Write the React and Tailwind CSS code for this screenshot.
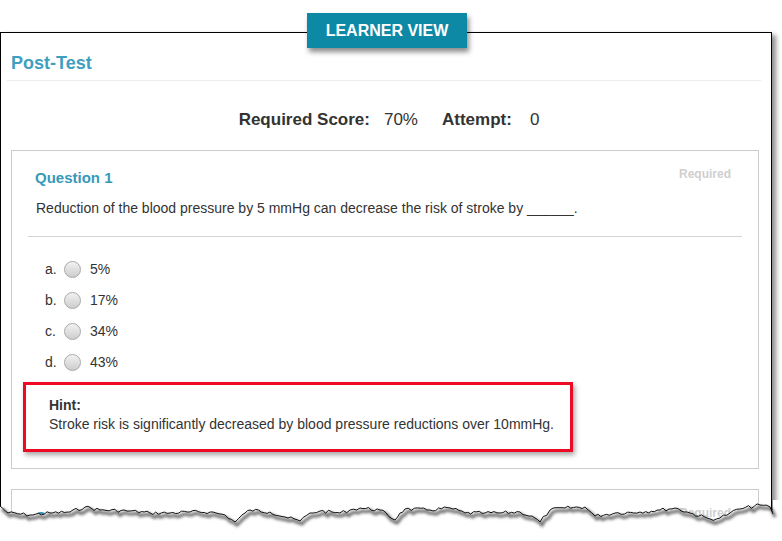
import React from 'react'

// anchor points of the torn paper edge, traced from the picture
const TEAR = [
  [0, 506], [8, 513], [30, 515], [50, 513], [70, 512], [85, 507], [100, 510], [130, 511],
  [150, 513], [170, 513], [190, 512], [210, 512], [225, 515], [235, 522], [245, 513],
  [250, 510], [270, 512], [285, 517], [300, 521], [310, 513], [320, 511], [340, 513],
  [350, 510], [360, 508], [380, 510], [395, 520], [400, 513], [405, 509], [430, 510],
  [450, 508], [465, 513], [485, 513], [500, 513], [520, 512], [535, 518], [540, 522],
  [550, 510], [565, 508], [585, 507], [595, 516], [615, 513], [640, 512], [660, 510],
  [675, 508], [690, 513], [710, 519], [720, 518], [730, 513], [740, 509], [760, 505],
  [770, 507], [773, 514],
]

function tearLine() {
  let seed = 7
  const rnd = () => {
    seed = (seed * 9301 + 49297) % 233280
    return seed / 233280
  }
  const pts = []
  for (let i = 0; i < TEAR.length - 1; i++) {
    const [x1, y1] = TEAR[i]
    const [x2, y2] = TEAR[i + 1]
    const steps = Math.max(1, Math.round((x2 - x1) / 3))
    for (let s = 0; s < steps; s++) {
      const t = s / steps
      const jitter = s === 0 ? 0 : (rnd() - 0.5) * 3.5
      pts.push([x1 + (x2 - x1) * t, y1 + (y2 - y1) * t + jitter])
    }
  }
  pts.push(TEAR[TEAR.length - 1])
  return pts.map((p, i) => `${i === 0 ? 'M' : 'L'}${p[0].toFixed(1)} ${p[1].toFixed(1)}`).join(' ')
}

function TornEdge() {
  const line = tearLine()
  return (
    <svg className="absolute left-0 top-0" width="782" height="541" viewBox="0 0 782 541">
      <defs>
        <filter id="blur" x="-5%" y="-50%" width="110%" height="200%">
          <feGaussianBlur stdDeviation="1.6" />
        </filter>
      </defs>
      <path d={`${line} L773 500 L782 500 L782 541 L0 541 Z`} fill="#ffffff" />
      <path d={line} transform="translate(2 3)" fill="none" stroke="rgba(0,0,0,0.6)" strokeWidth="3" filter="url(#blur)" />
      <path d={line} fill="none" stroke="#111" strokeWidth="1" />
    </svg>
  )
}

const OPTIONS = [
  { key: 'a.', text: '5%' },
  { key: 'b.', text: '17%' },
  { key: 'c.', text: '34%' },
  { key: 'd.', text: '43%' },
]

function Radio() {
  return <span className="w-[17px] h-[17px] rounded-full border border-[#a8a8a8] bg-linear-to-b from-[#f2f2f2] to-[#cdcdcd]" />
}

export default function App() {
  return (
    <div className="relative w-[782px] h-[541px] overflow-hidden bg-white text-[#333] font-['Liberation_Sans',Arial,sans-serif]">
      <div className="pt-[32px]">
        <div className="w-[772px] h-[520px] border border-black bg-white shadow-[4px_3px_5px_rgba(0,0,0,0.45)]">
          <div className="ml-[6px] mr-[10px]">
            {/* header */}
            <div className="h-[48px] pt-[20px] pl-[4px] border-b border-[#ececec]">
              <h1 className="text-[18px] leading-[21px] font-bold text-[#409fbf]">Post-Test</h1>
            </div>

            <div className="mt-[29px] pl-[10px] flex justify-center text-[17px] leading-[20px]">
              <span className="font-bold">Required Score:</span>
              <span className="ml-[14px]">70%</span>
              <span className="ml-[24px] font-bold">Attempt:</span>
              <span className="ml-[18px]">0</span>
            </div>

            {/* question card */}
            <div className="mt-[20px] ml-[4px] w-[748px] border border-[#cccccc] pb-[16px]">
              <div className="flex justify-between items-start pt-[18px] pl-[23px] pr-[27px]">
                <h2 className="text-[15px] leading-[18px] font-bold text-[#3799ba]">Question 1</h2>
                <span className="-mt-[2px] text-[12px] leading-[14px] font-bold text-[#cfcfcf]">Required</span>
              </div>
              <p className="mt-[13px] pl-[24px] text-[14px] leading-[17px]">
                Reduction of the blood pressure by 5 mmHg can decrease the risk of stroke by ______.
              </p>
              <div className="mt-[19px] mx-[16px] border-t border-[#d4d4d4]" />

              <div className="mt-[17px] pl-[33px]">
                {OPTIONS.map(o => (
                  <div key={o.key} className="h-[31px] flex items-center text-[14px]">
                    <span className="w-[19px]">{o.key}</span>
                    <Radio />
                    <span className="ml-[9px]">{o.text}</span>
                  </div>
                ))}
              </div>

              <div className="mt-[4px] ml-[11px] w-[550px] h-[70px] border-[3px] border-[#ee0a22] pt-[11px] pl-[23px] text-[14px] leading-[19px] shadow-[2px_3px_5px_rgba(0,0,0,0.35)]">
                <div className="font-bold">Hint:</div>
                <div>Stroke risk is significantly decreased by blood pressure reductions over 10mmHg.</div>
              </div>
            </div>

            {/* next question, cut off by the torn edge */}
            <div className="mt-[20px] ml-[4px] w-[748px] h-[120px] border border-[#cccccc]">
              <div className="flex justify-between items-start pt-[18px] pl-[23px] pr-[27px]">
                <h2 className="text-[15px] leading-[18px] font-bold text-[#3799ba]">Question 2</h2>
                <span className="-mt-[2px] text-[12px] leading-[14px] font-bold text-[#cfcfcf]">Required</span>
              </div>
            </div>
          </div>
        </div>
      </div>

      <TornEdge />

      {/* badge over the frame */}
      <div className="absolute left-[307px] top-[13px] w-[160px] h-[35px] bg-[#0d89a6] flex items-center justify-center text-white text-[16px] font-bold shadow-[2px_4px_5px_rgba(0,0,0,0.45)]">
        LEARNER VIEW
      </div>
    </div>
  )
}
